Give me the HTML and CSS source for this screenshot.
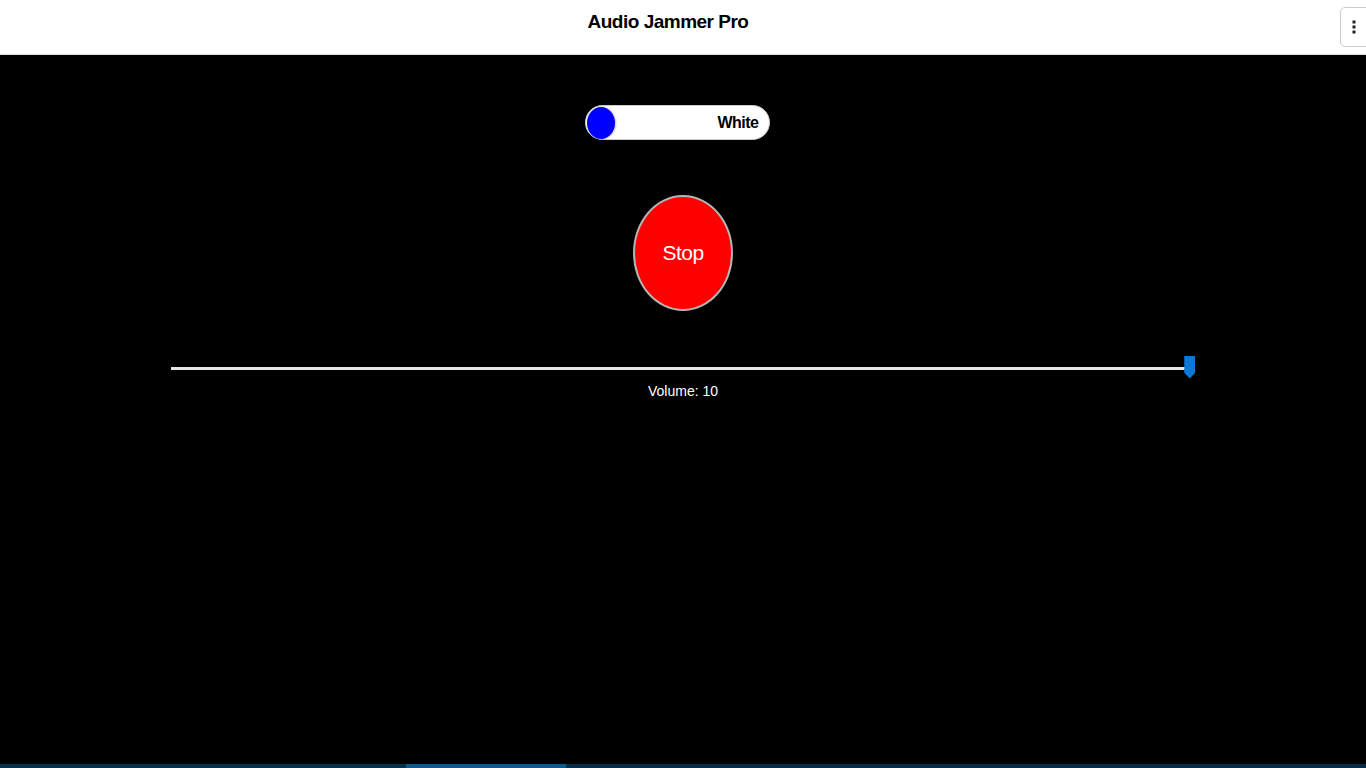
FILE: index.html
```html
<!DOCTYPE html>
<html lang="en">
<head>
  <meta charset="UTF-8" />
  <meta name="viewport" content="width=device-width, initial-scale=1.0"/>
  <title>Audio Jammer Pro</title>
  <link rel="stylesheet" href="styles.css">
</head>
<body>
  <header class="topbar">
    <h1>Audio Jammer Pro</h1>
    <button class="menu-btn" aria-label="Menu">
      <svg width="4" height="14" viewBox="0 0 4 14">
        <rect x="0.5" y="0.5" width="3" height="3" fill="#222"/>
        <rect x="0.5" y="5.5" width="3" height="3" fill="#222"/>
        <rect x="0.5" y="10.5" width="3" height="3" fill="#222"/>
      </svg>
    </button>
  </header>

  <main class="content">
    <label class="noise-toggle">
      <span class="knob"></span>
      <span class="noise-name">White</span>
    </label>

    <button class="stop-btn">Stop</button>

    <input class="volume" type="range" min="0" max="10" value="10">
    <div class="volume-label">Volume: 10</div>
  </main>

  <div class="statusbar">
    <span class="seg"></span>
    <span class="seg active"></span>
    <span class="seg rest"></span>
  </div>
</body>
</html>
```

FILE: styles.css
```css
body {
  margin: 0;
  padding: 0;
  background: #000;
  font-family: 'Liberation Sans', Arial, sans-serif;
  display: flex;
  flex-direction: column;
  min-height: 100vh;
  overflow: hidden;
}

.topbar {
  height: 54px;
  background: #fff;
  border-bottom: 1px solid #ddd;
  display: flex;
  align-items: flex-start;
}

.topbar h1 {
  flex: 1;
  text-align: center;
  margin: 11px 0 0;
  font-size: 19px;
  letter-spacing: -0.5px;
  font-weight: bold;
  color: #000;
  line-height: 22px;
}

.menu-btn {
  flex: none;
  margin: 7px -6px 0 4px;
  width: 32px;
  height: 40px;
  background: #fff;
  border: 1px solid #ccc;
  border-radius: 5px;
  padding: 0 4px 0 0;
  display: flex;
  align-items: center;
  justify-content: center;
}

.content {
  flex: 1;
  display: flex;
  flex-direction: column;
  align-items: center;
  padding-top: 50px;
}

.noise-toggle {
  width: 185px;
  height: 35px;
  margin-right: 12px;
  box-sizing: border-box;
  background: #fff;
  border-radius: 18px;
  border: 1px solid #ccc;
  display: flex;
  align-items: center;
  justify-content: space-between;
  padding: 0 10px 0 1px;
}

.knob {
  width: 28px;
  height: 32px;
  border-radius: 50%;
  background: #00f;
  box-shadow: 1px 0 2px rgba(0,0,0,0.25);
}

.noise-name {
  font-size: 16px;
  letter-spacing: -0.5px;
  font-weight: bold;
  color: #000;
}

.stop-btn {
  margin-top: 55px;
  width: 100px;
  height: 116px;
  border-radius: 50%;
  background: #f00;
  border: 2px solid #b5b5b5;
  color: #fff;
  font-family: 'Liberation Sans', Arial, sans-serif;
  font-size: 21px;
  letter-spacing: -0.5px;
  padding: 0;
}

.volume {
  -webkit-appearance: none;
  appearance: none;
  width: 75%;
  height: 24px;
  margin: 45px 0 0;
  background: transparent;
}

.volume::-webkit-slider-runnable-track {
  height: 3px;
  background: #e6e6e6;
}

.volume::-webkit-slider-thumb {
  -webkit-appearance: none;
  width: 11px;
  height: 23px;
  margin-top: -11px;
  margin-right: 2px;
  background: #0b78d7;
  clip-path: polygon(0 0, 100% 0, 100% 75%, 50% 100%, 0 75%);
}

.volume-label {
  margin-top: 3px;
  font-size: 14px;
  color: #fff;
}

.statusbar {
  height: 4px;
  display: flex;
}

.seg {
  width: 406px;
  background: #06314b;
}

.seg.active {
  width: 160px;
  background: #0b5a8c;
}

.seg.rest {
  flex: 1;
  width: auto;
  background: #042c44;
}
```
